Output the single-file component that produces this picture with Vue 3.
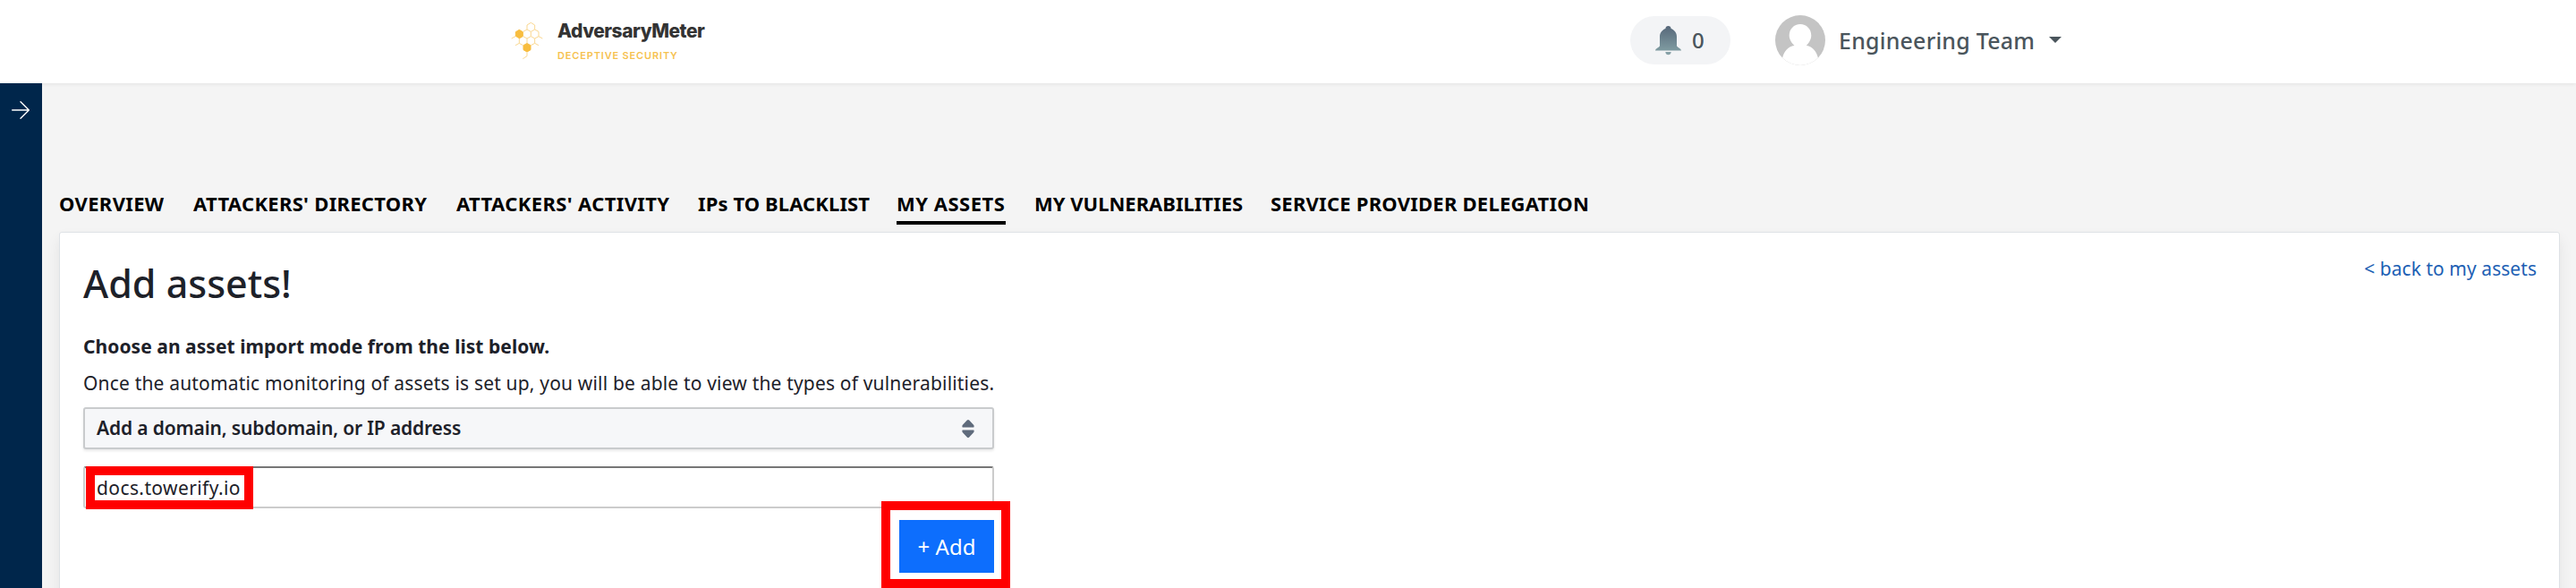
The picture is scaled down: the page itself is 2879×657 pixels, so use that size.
<script setup>
const tabs = [
  { label: 'OVERVIEW', cls: 't1' },
  { label: "ATTACKERS' DIRECTORY", cls: 't2' },
  { label: "ATTACKERS' ACTIVITY", cls: 't3' },
  { label: 'IPs TO BLACKLIST', cls: 't4' },
  { label: 'MY ASSETS', cls: 't5', active: true },
  { label: 'MY VULNERABILITIES', cls: 't6' },
  { label: 'SERVICE PROVIDER DELEGATION', cls: 't7' },
]
</script>

<template>
  <div class="page">
    <header class="topbar">
      <div class="brand">
        <svg class="comb" width="37" height="44" viewBox="63 72 111 132" fill="none" stroke="#fad891" stroke-width="3">
          <path d="M117 99v-15l13-8 13 8v15M117 99l13 7 13-7 13 7v16l-13 7-13-7v-16M104 106l13-7M104 122l13 7 13-7M117 129v16M143 129v16l-13 7-13-7-13 7-13-7v-16l13-7M156 122l13 7M78 122l-13 7M143 145l13 7M91 145l-13 7M117 176v12l-14 9" />
          <path fill="#f8bd3e" stroke="#f8bd3e" d="M91 100l12 7v14l-12 7-12-7v-14zM117 146l12 7v14l-12 7-12-7v-14z" />
        </svg>
        <div class="brand-text">
          <div class="brand-name">AdversaryMeter</div>
          <div class="brand-sub">DECEPTIVE SECURITY</div>
        </div>
      </div>
      <div class="tools">
        <div class="pill">
          <svg width="29" height="33" viewBox="0 0 29 33">
            <defs>
              <linearGradient id="bell" x1="0" y1="0" x2="0" y2="1">
                <stop offset="0" stop-color="#566779" />
                <stop offset="1" stop-color="#7f9ba1" />
              </linearGradient>
            </defs>
            <path fill="url(#bell)" d="M14.500 0C16.300 0 17.600 1.300 17.600 3C21.500 4.400 24 8 24 12V22C24 24 29 25 29 27.500H0C0 25 5 24 5 22V12C5 8 7.500 4.400 11.400 3C11.400 1.300 12.700 0 14.500 0Z" />
            <path fill="#86a0a6" d="M11.300 29H17.700C17.400 31.200 16.300 32.300 14.500 32.300S11.600 31.200 11.300 29Z" />
          </svg>
          <span>0</span>
        </div>
        <svg class="avatar" width="56" height="56" viewBox="0 0 56 56">
          <clipPath id="round"><circle cx="28" cy="28" r="28" /></clipPath>
          <g clip-path="url(#round)">
            <rect width="56" height="56" fill="#c4c4c4" />
            <path fill="#fff" d="M28 10c7 0 12.300 5.500 12.300 12.500 0 4.500-2.500 8.500-5.500 11.200C42 35 46.500 41 48 48v9H8v-9c1.500-7 6-13 13.500-14.300-3.300-2.700-5.800-6.700-5.800-11.200C15.700 15.500 21 10 28 10z" />
          </g>
        </svg>
        <span class="user">Engineering Team</span>
        <svg class="caret" width="14" height="7" viewBox="0 0 14 7"><path fill="#4a555c" d="M0 0h14L7 7z" /></svg>
      </div>
    </header>

    <div class="body">
      <aside class="side">
        <svg width="20" height="20" viewBox="0 0 20 20" fill="none" stroke="#fff" stroke-width="1.400" stroke-linecap="round" stroke-linejoin="round">
          <path d="M.7 10h18.600M10 .7l9.300 9.300-9.300 9.300" />
        </svg>
      </aside>
      <main class="main">
        <nav class="tabs">
          <a v-for="t in tabs" :key="t.label" :class="[t.cls, { active: t.active }]">{{ t.label }}</a>
        </nav>
        <section class="card">
          <div class="form">
            <h1>Add assets!</h1>
            <p class="lead">Choose an asset import mode from the list below.</p>
            <p class="info">Once the automatic monitoring of assets is set up, you will be able to view the types of vulnerabilities.</p>
            <div class="select">
              <span>Add a domain, subdomain, or IP address</span>
              <svg width="14" height="20" viewBox="0 0 14 20" fill="#5f6b7c">
                <path d="M5.800.6q1.200-1 2.400 0l4.900 5.200q1 1.200.2 2.600H.7q-.8-1.400.2-2.600zM5.800 19.400q1.200 1 2.400 0l4.900-5.200q1-1.200.2-2.600H.7q-.8 1.400.2 2.600z" />
              </svg>
            </div>
            <div class="input">
              <span>docs.towerify.io</span>
              <i class="mark mark-input"></i>
            </div>
            <div class="actions">
              <button class="add"><span>+ Add</span></button>
              <i class="mark mark-add"></i>
            </div>
          </div>
          <a class="back">&lt; back to my assets</a>
        </section>
      </main>
    </div>
  </div>
</template>

<style>
body { background: #f4f4f4; overflow: hidden; }
</style>

<style scoped>
.page { width: 2879px; height: 657px; overflow: hidden; background: #f4f4f4; color: #1d2129; font-family: "Noto Sans", sans-serif; font-size: 21px; display: flex; flex-direction: column; white-space: nowrap; }
.page * { box-sizing: border-box; }
.topbar { height: 93px; flex: none; background: #fff; display: flex; justify-content: space-between; padding: 0 575px 0 571px; box-shadow: 0 1px 4px rgba(0, 0, 0, .07); }
.brand { display: flex; }
.comb { margin-top: 24px; }
.brand-text { margin-left: 15px; padding-top: 20px; font-family: Inter, sans-serif; }
.brand-name { font-size: 21px; line-height: 29px; font-weight: 800; color: #333; letter-spacing: -.5px; }
.brand-sub { margin-top: 6px; font-size: 11px; line-height: 14px; font-weight: 600; color: #f6c251; letter-spacing: .84px; }
.tools { display: flex; align-items: flex-start; color: #4a555c; font-weight: 500; }
.pill { width: 112px; height: 54px; margin-top: 18px; border-radius: 27px; background: #f3f4f6; display: flex; align-items: center; padding-left: 28px; font-size: 24px; }
.pill span { margin: -1px 0 0 12px; }
.avatar { margin: 17px 0 0 50px; }
.user { width: 233px; margin: 27px 0 0 15px; font-size: 25px; line-height: 36px; letter-spacing: .2px; }
.caret { margin: 41px 0 0 2px; }
.body { flex: 1; display: flex; min-height: 0; }
.side { width: 47px; background: #00264b; padding: 19.500px 0 0 12.500px; }
.side svg { display: block; }
.main { flex: 1; padding: 116px 18px 0 19px; }
.tabs { display: flex; height: 50px; color: #000; font-size: 22px; font-weight: 700; line-height: 36px; }
.tabs a { height: 42px; }
.t1 { width: 118px; margin-right: 32px; letter-spacing: .35px; }
.t2 { width: 262px; margin-right: 32px; letter-spacing: .3px; }
.t3 { width: 239px; margin-right: 31px; letter-spacing: .37px; }
.t4 { width: 190px; margin-right: 32px; letter-spacing: .1px; }
.t5 { width: 122px; margin-right: 32px; letter-spacing: .5px; }
.t6 { width: 233px; margin-right: 31px; letter-spacing: 0; }
.t7 { width: 356px; letter-spacing: .23px; }
.tabs .active { border-bottom: 4px solid #000; }
.card { height: 460px; background: #fff; border: 1px solid #dee2e6; border-radius: 3px; box-shadow: 0 8px 16px rgba(0, 0, 0, .07); display: flex; justify-content: space-between; padding: 0 25px 0 26px; }
.form { width: 1018px; }
h1 { margin: 27px 0 0; font-size: 43px; line-height: 60px; font-weight: 500; }
p { margin: 0; line-height: 30px; }
.lead { margin-top: 25px; font-weight: 700; letter-spacing: .05px; }
.info { margin-top: 11px; letter-spacing: .178px; }
.select { margin-top: 12px; height: 47px; border: 2px solid #c9cbcd; border-radius: 3px; background: #f6f7f9; box-shadow: 0 2px 3px rgba(0, 0, 0, .09); display: flex; align-items: center; justify-content: space-between; padding: 0 20px 0 13px; font-weight: 600; letter-spacing: -.15px; }
.select span { margin-top: -2px; }
.input { position: relative; margin-top: 19px; height: 47px; border: 2px solid #ccc; border-top-color: #767676; border-radius: 3px; padding-left: 13px; line-height: 44px; letter-spacing: .4px; }
.mark { position: absolute; border: 10px solid #f00; z-index: 2; }
.mark-input { left: 1px; top: -2px; width: 187px; height: 48px; }
.actions { position: relative; margin-top: 13px; display: flex; justify-content: flex-end; }
.add { width: 106px; height: 59px; border: 0; background: #0d6efd; color: #fff; font: 24px "Noto Sans", sans-serif; padding: 0 0 1px; }
.mark-add { right: -18px; top: -21px; width: 144px; height: 97px; }
.back { color: #1d5fb4; margin-top: 25px; line-height: 30px; letter-spacing: .05px; }
</style>
